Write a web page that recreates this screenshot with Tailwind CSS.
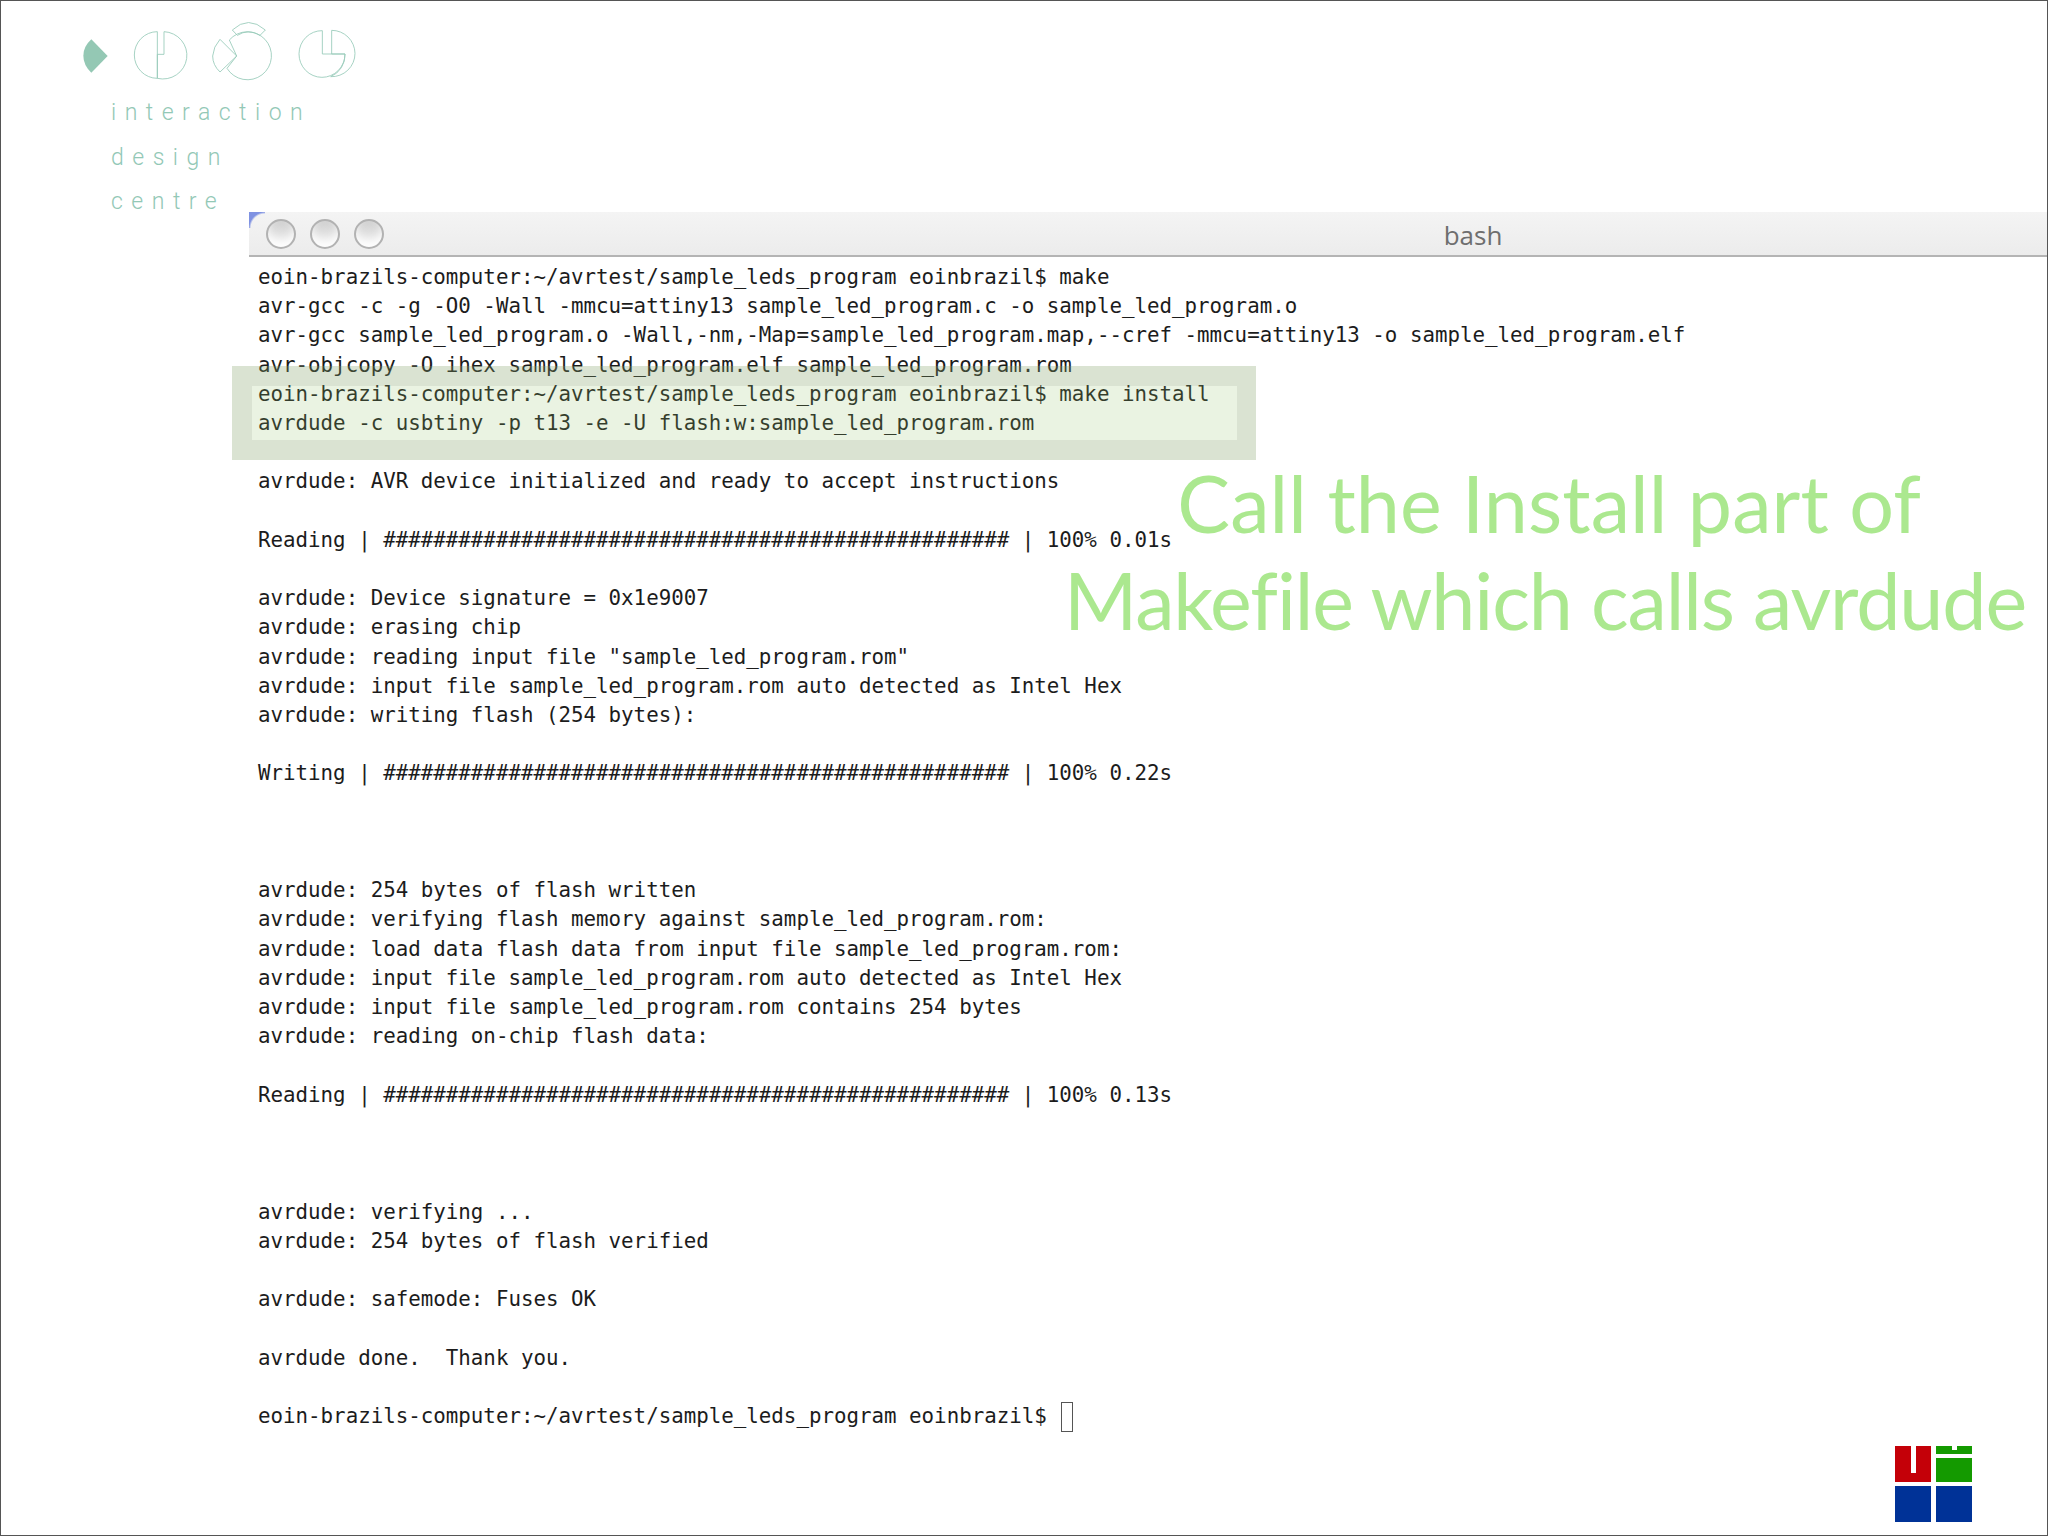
<!DOCTYPE html>
<html lang="en">
<head>
  <meta charset="UTF-8">
  <title>Call the Install part of Makefile</title>
  <script src="https://cdn.jsdelivr.net/npm/@tailwindcss/browser@4"></script>
</head>
<body class="bg-white">

  <div class="relative w-[2048px] h-[1536px] bg-white border border-[#555555] overflow-hidden">

    <!-- logo top left -->
    <div class="h-[211px]">
      <svg class="block" width="360" height="84" viewBox="3 3 1080 252" fill="none" stroke="#98cbb9" stroke-width="2.6">
        <path d="M274 118 L323 168 L274 218 Q250 195 250 167 Q250 140 274 118 Z" fill="#94c8b4" stroke="none"/>
        <path d="M472 95 A69 70 0 0 0 472 235 Z"/>
        <path d="M492 95 L492 163 L472 163 L472 235 A72 71 0 1 0 492 95 Z"/>
        <path d="M688 120 L710 168 L681 205 A72 72 0 1 0 688 120"/>
        <path d="M660 118 L710 168 L660 216 Q638 195 638 168 Q640 140 660 118 Z"/>
        <path d="M697 90 Q745 45 796 90 L780 106 Q745 85 712 106 Z"/>
        <path d="M967 92 A69 70 0 1 0 1035 162 L967 162 Z"/>
        <path d="M995 91 L995 162 L1035 162 A69 70 0 0 1 992 230 A70 70 0 0 0 1065 160 A70 70 0 0 0 995 91 Z"/>
      </svg>
      <div class="pl-[110px] pt-[6px] font-['Roboto',sans-serif] font-light text-[23px] leading-[44.5px] tracking-[8.5px] text-[#93c8b6]">
        <p>interaction</p>
        <p>design</p>
        <p>centre</p>
      </div>
    </div>

    <!-- terminal window -->
    <div class="ml-[248px]">
      <div class="relative h-[45px] flex items-center border-b-2 border-[#b4b4b4] bg-linear-to-b from-[#f4f4f4] to-[#ececec]">
        <div class="absolute left-0 top-0 w-[16px] h-[16px] bg-[radial-gradient(circle_at_100%_100%,transparent_14px,#7f92e2_16px)]"></div>
        <div class="flex gap-[14px] pl-[17px]">
          <span class="w-[30px] h-[30px] rounded-full border-2 border-[#b2b2b2] bg-linear-to-b from-[#cfcfcf] to-[#f6f6f6] shadow-[inset_0_-6px_8px_rgba(255,255,255,0.8)]"></span>
          <span class="w-[30px] h-[30px] rounded-full border-2 border-[#b2b2b2] bg-linear-to-b from-[#cfcfcf] to-[#f6f6f6] shadow-[inset_0_-6px_8px_rgba(255,255,255,0.8)]"></span>
          <span class="w-[30px] h-[30px] rounded-full border-2 border-[#b2b2b2] bg-linear-to-b from-[#cfcfcf] to-[#f6f6f6] shadow-[inset_0_-6px_8px_rgba(255,255,255,0.8)]"></span>
        </div>
        <span class="absolute left-[1194px] top-[7px] w-[60px] text-center font-['Open_Sans',sans-serif] text-[26px] leading-[32px] text-[#6e6e6e]">bash</span>
      </div>
      <pre class="pl-[9px] pt-[6px] font-['DejaVu_Sans_Mono',monospace] text-[20.8px] leading-[29.2px] text-[#1c1c1c]">eoin-brazils-computer:~/avrtest/sample_leds_program eoinbrazil$ make
avr-gcc -c -g -O0 -Wall -mmcu=attiny13 sample_led_program.c -o sample_led_program.o
avr-gcc sample_led_program.o -Wall,-nm,-Map=sample_led_program.map,--cref -mmcu=attiny13 -o sample_led_program.elf
avr-objcopy -O ihex sample_led_program.elf sample_led_program.rom
eoin-brazils-computer:~/avrtest/sample_leds_program eoinbrazil$ make install
avrdude -c usbtiny -p t13 -e -U flash:w:sample_led_program.rom

avrdude: AVR device initialized and ready to accept instructions

Reading | ################################################## | 100% 0.01s

avrdude: Device signature = 0x1e9007
avrdude: erasing chip
avrdude: reading input file "sample_led_program.rom"
avrdude: input file sample_led_program.rom auto detected as Intel Hex
avrdude: writing flash (254 bytes):

Writing | ################################################## | 100% 0.22s



avrdude: 254 bytes of flash written
avrdude: verifying flash memory against sample_led_program.rom:
avrdude: load data flash data from input file sample_led_program.rom:
avrdude: input file sample_led_program.rom auto detected as Intel Hex
avrdude: input file sample_led_program.rom contains 254 bytes
avrdude: reading on-chip flash data:

Reading | ################################################## | 100% 0.13s



avrdude: verifying ...
avrdude: 254 bytes of flash verified

avrdude: safemode: Fuses OK

avrdude done.  Thank you.

eoin-brazils-computer:~/avrtest/sample_leds_program eoinbrazil$ <span class="inline-block ml-[2px] w-[12px] h-[30px] align-middle border border-[#555555]"></span></pre>
    </div>

    <!-- highlight over the make install lines -->
    <div class="absolute left-[231px] top-[365px] w-[1024px] h-[94px] border-l-[20px] border-r-[19px] border-y-[20px] border-[#84a269]/30 bg-[#96c36e]/20 bg-clip-padding"></div>

    <!-- caption -->
    <div class="absolute right-[21px] top-[453px] w-[1100px] font-['Lato',sans-serif] text-[79px] leading-[97px] text-[#abe88f] text-right whitespace-nowrap">
      <p class="pr-[105px] tracking-[0.1px]">Call the Install part of</p>
      <p class="tracking-[-1.1px]">Makefile which calls avrdude</p>
    </div>

    <!-- logo bottom right -->
    <div class="absolute left-[1894px] top-[1445px] grid grid-cols-2 gap-x-[5px] gap-y-[4px]">
      <div class="relative w-[36px] h-[36px] bg-[#c40008]">
        <div class="absolute left-[16px] top-0 w-[5px] h-[27px] bg-white"></div>
      </div>
      <div class="relative w-[36px] h-[36px] bg-[#149a00]">
        <div class="absolute left-[16px] top-0 w-[5px] h-[4px] bg-white"></div>
        <div class="absolute left-0 top-[8px] w-full h-[4px] bg-white"></div>
      </div>
      <div class="w-[36px] h-[36px] bg-[#003297]"></div>
      <div class="w-[36px] h-[36px] bg-[#003297]"></div>
    </div>

  </div>

</body>
</html>
